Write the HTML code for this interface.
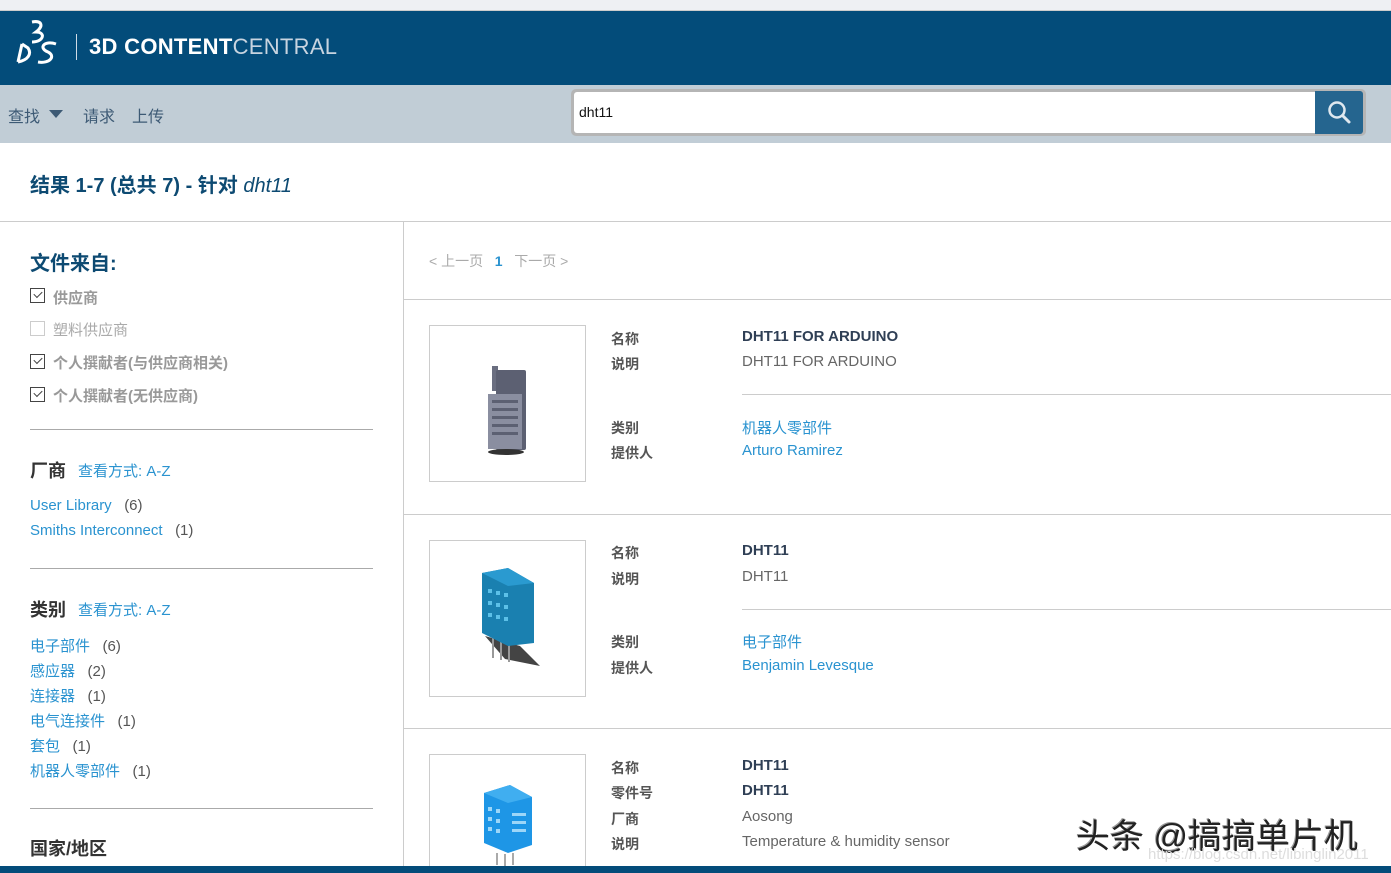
<!DOCTYPE html>
<html><head><meta charset="utf-8"><style>
*{margin:0;padding:0;box-sizing:border-box}
html,body{width:1391px;height:873px;overflow:hidden}
body{background:#fff;font-family:"Liberation Sans","Noto Sans CJK SC",sans-serif;position:relative;color:#555}
.a{position:absolute;white-space:nowrap}
.lbl{font-size:14px;font-weight:bold;color:#555}
.val{font-size:15px;color:#666}
.bv{font-size:15px;font-weight:bold;color:#2f3f55}
.lk{color:#2a93d0}
.cb{position:absolute;width:15px;height:15px;border:1px solid #444;left:30px}
.cb::after{content:"";position:absolute;left:3px;top:2px;width:7px;height:4px;border-left:1.5px solid #444;border-bottom:1.5px solid #444;transform:rotate(-45deg)}
.cb.n::after{display:none}
.cbl{font-size:15px;font-weight:bold;color:#999}
.hr{position:absolute;background:#ccc;height:1px}
.thumb{position:absolute;left:429px;width:157px;height:157px;border:1px solid #ccc;background:#fff;overflow:hidden}
</style></head><body>
<div class="a" style="left:0;top:0;width:1391px;height:11px;background:#eef0f3;border-bottom:1px solid #ccc"></div>
<div class="a" style="left:0;top:11px;width:1391px;height:74px;background:#034c7a"></div>
<svg class="a" style="left:14px;top:18px" width="50" height="48" viewBox="0 0 50 48"><path d="M18 4 C28 2 30 8 22 14 C32 14 30 24 18 24" fill="none" stroke="#fff" stroke-width="3"/><path d="M8 26 L4 44 M4 44 C14 42 18 36 14 30 L8 26" fill="none" stroke="#fff" stroke-width="3"/><path d="M42 26 C30 22 24 30 34 34 C42 38 36 46 24 44" fill="none" stroke="#fff" stroke-width="3"/></svg>
<div class="a" style="left:76px;top:34px;width:1px;height:26px;background:#cfdbe6"></div>
<div class="a" style="left:89px;top:34px;font-size:22px;color:#fff;letter-spacing:0.3px"><b>3D CONTENT</b><span style="color:#c8d4e0">CENTRAL</span></div>
<div class="a" style="left:0;top:85px;width:1391px;height:58px;background:#c1cdd6"></div>
<div class="a" style="left:8px;top:103px;font-size:16px;color:#3d5a75">查找</div>
<svg class="a" style="left:49px;top:110px" width="14" height="9"><path d="M0 0 L14 0 L7 8Z" fill="#3d5a75"/></svg>
<div class="a" style="left:83px;top:103px;font-size:16px;color:#3d5a75">请求</div>
<div class="a" style="left:132px;top:103px;font-size:16px;color:#3d5a75">上传</div>
<div class="a" style="left:571px;top:89px;width:795px;height:47px;background:#b5b5b5;border-radius:5px"></div>
<div class="a" style="left:574px;top:92px;width:741px;height:41px;background:#fff;border-radius:3px 0 0 3px"></div>
<div class="a" style="left:579px;top:104px;font-size:14px;color:#111">dht11</div>
<div class="a" style="left:1315px;top:91px;width:48px;height:43px;background:#25658f;border-radius:0 3px 3px 0"></div>
<svg class="a" style="left:1327px;top:100px" width="26" height="26" viewBox="0 0 26 26"><circle cx="10" cy="10" r="7.5" fill="none" stroke="#dfe8ef" stroke-width="2.5"/><path d="M15.5 15.5 L22 22" stroke="#dfe8ef" stroke-width="3" stroke-linecap="round"/></svg>
<div class="a" style="left:30px;top:169px;font-size:20px;font-weight:bold;color:#0d4a72">结果 1-7 (总共 7) - 针对 <i style="font-weight:normal">dht11</i></div>
<div class="hr" style="left:0;top:221px;width:1391px"></div>
<div class="a" style="left:403px;top:221px;width:1px;height:645px;background:#ccc"></div>
<div class="a" style="left:30px;top:247px;font-size:20px;font-weight:bold;color:#0d4a72">文件来自:</div>
<div class="cb" style="top:288px"></div><div class="a cbl" style="left:53px;top:287px">供应商</div>
<div class="cb n" style="top:321px;border-color:#ccc"></div><div class="a cbl" style="left:53px;top:319px;font-weight:normal;color:#aaa">塑料供应商</div>
<div class="cb" style="top:354px"></div><div class="a cbl" style="left:53px;top:352px">个人撰献者(与供应商相关)</div>
<div class="cb" style="top:387px"></div><div class="a cbl" style="left:53px;top:385px">个人撰献者(无供应商)</div>
<div class="hr" style="left:30px;top:429px;width:343px;background:#aaa"></div>
<div class="a" style="left:30px;top:457px;font-size:18px;font-weight:bold;color:#333">厂商</div><div class="a lk" style="left:78px;top:460px;font-size:15px">查看方式: A-Z</div>
<div class="a" style="left:30px;top:497px;font-size:15px"><span class="lk">User Library</span>&nbsp;&nbsp;&nbsp;(6)</div>
<div class="a" style="left:30px;top:522px;font-size:15px"><span class="lk">Smiths Interconnect</span>&nbsp;&nbsp;&nbsp;(1)</div>
<div class="hr" style="left:30px;top:568px;width:343px;background:#aaa"></div>
<div class="a" style="left:30px;top:596px;font-size:18px;font-weight:bold;color:#333">类别</div><div class="a lk" style="left:78px;top:599px;font-size:15px">查看方式: A-Z</div>
<div class="a" style="left:30px;top:634px;font-size:15px;line-height:25px"><span class="lk">电子部件</span>&nbsp;&nbsp;&nbsp;(6)<br><span class="lk">感应器</span>&nbsp;&nbsp;&nbsp;(2)<br><span class="lk">连接器</span>&nbsp;&nbsp;&nbsp;(1)<br><span class="lk">电气连接件</span>&nbsp;&nbsp;&nbsp;(1)<br><span class="lk">套包</span>&nbsp;&nbsp;&nbsp;(1)<br><span class="lk">机器人零部件</span>&nbsp;&nbsp;&nbsp;(1)</div>
<div class="hr" style="left:30px;top:808px;width:343px;background:#aaa"></div>
<div class="a" style="left:30px;top:835px;font-size:18px;font-weight:bold;color:#333">国家/地区</div>
<div class="a" style="left:429px;top:251px;font-size:14px;color:#aaa">&lt; 上一页&nbsp;&nbsp;&nbsp;<b class="lk">1</b>&nbsp;&nbsp;&nbsp;下一页 &gt;</div>
<div class="hr" style="left:403px;top:299px;width:988px"></div>
<!-- result 1 -->
<div class="thumb" style="top:325px"><svg width="155" height="155" viewBox="0 0 155 155"><rect x="62" y="40" width="6" height="25" fill="#6a6e80"/><rect x="66" y="44" width="30" height="80" rx="2" fill="#5c6072"/><rect x="58" y="68" width="34" height="55" fill="#8a8ea0"/><g fill="#5c6072"><rect x="62" y="74" width="26" height="3"/><rect x="62" y="82" width="26" height="3"/><rect x="62" y="90" width="26" height="3"/><rect x="62" y="98" width="26" height="3"/><rect x="62" y="106" width="26" height="3"/></g><ellipse cx="76" cy="126" rx="18" ry="3" fill="#333"/></svg></div>
<div class="a lbl" style="left:611px;top:329px">名称</div><div class="a bv" style="left:742px;top:328px">DHT11 FOR ARDUINO</div>
<div class="a lbl" style="left:611px;top:354px">说明</div><div class="a val" style="left:742px;top:353px">DHT11 FOR ARDUINO</div>
<div class="hr" style="left:742px;top:394px;width:649px"></div>
<div class="a lbl" style="left:611px;top:418px">类别</div><div class="a val lk" style="left:742px;top:417px">机器人零部件</div>
<div class="a lbl" style="left:611px;top:443px">提供人</div><div class="a val lk" style="left:742px;top:442px">Arturo Ramirez</div>
<div class="hr" style="left:403px;top:514px;width:988px"></div>
<!-- result 2 -->
<div class="thumb" style="top:540px"><svg width="155" height="155" viewBox="0 0 155 155"><path d="M55 95 L90 105 L110 125 L75 118Z" fill="#444"/><rect x="62" y="95" width="2" height="22" fill="#999"/><rect x="70" y="97" width="2" height="22" fill="#999"/><rect x="78" y="99" width="2" height="22" fill="#999"/><path d="M52 32 L78 27 L104 42 L104 102 L78 105 L52 92Z" fill="#1a80b0"/><path d="M52 32 L78 27 L104 42 L78 45Z" fill="#2a9ad0"/><g fill="#5cc0e8"><rect x="58" y="48" width="4" height="4"/><rect x="66" y="50" width="4" height="4"/><rect x="74" y="52" width="4" height="4"/><rect x="58" y="60" width="4" height="4"/><rect x="66" y="62" width="4" height="4"/><rect x="74" y="64" width="4" height="4"/><rect x="58" y="72" width="4" height="4"/><rect x="66" y="74" width="4" height="4"/><rect x="74" y="76" width="4" height="4"/></g></svg></div>
<div class="a lbl" style="left:611px;top:543px">名称</div><div class="a bv" style="left:742px;top:542px">DHT11</div>
<div class="a lbl" style="left:611px;top:569px">说明</div><div class="a val" style="left:742px;top:568px">DHT11</div>
<div class="hr" style="left:742px;top:609px;width:649px"></div>
<div class="a lbl" style="left:611px;top:632px">类别</div><div class="a val lk" style="left:742px;top:631px">电子部件</div>
<div class="a lbl" style="left:611px;top:658px">提供人</div><div class="a val lk" style="left:742px;top:657px">Benjamin Levesque</div>
<div class="hr" style="left:403px;top:728px;width:988px"></div>
<!-- result 3 -->
<div class="thumb" style="top:754px;height:112px;border-bottom:none"><svg width="155" height="112" viewBox="0 0 155 112"><path d="M54 38 L80 30 L102 42 L102 90 L78 98 L54 88Z" fill="#1e96e6"/><path d="M54 38 L80 30 L102 42 L78 48Z" fill="#40aef0"/><g fill="#9dd6f8"><rect x="58" y="52" width="4" height="4"/><rect x="66" y="54" width="4" height="4"/><rect x="58" y="62" width="4" height="4"/><rect x="66" y="64" width="4" height="4"/><rect x="58" y="72" width="4" height="4"/><rect x="66" y="74" width="4" height="4"/><rect x="82" y="58" width="14" height="3"/><rect x="82" y="66" width="14" height="3"/><rect x="82" y="74" width="14" height="3"/></g><rect x="66" y="98" width="2" height="12" fill="#aaa"/><rect x="74" y="99" width="2" height="12" fill="#aaa"/><rect x="82" y="98" width="2" height="12" fill="#aaa"/></svg></div>
<div class="a lbl" style="left:611px;top:758px">名称</div><div class="a bv" style="left:742px;top:757px">DHT11</div>
<div class="a lbl" style="left:611px;top:783px">零件号</div><div class="a bv" style="left:742px;top:782px">DHT11</div>
<div class="a lbl" style="left:611px;top:809px">厂商</div><div class="a val" style="left:742px;top:808px">Aosong</div>
<div class="a lbl" style="left:611px;top:834px">说明</div><div class="a val" style="left:742px;top:833px">Temperature &amp; humidity sensor</div>
<div class="a" style="left:1076px;top:809px;font-size:34px;color:#222;text-shadow:1px 1px 0 #fff,-1px -1px 0 #999">头条 @搞搞单片机</div>
<div class="a" style="left:1148px;top:846px;font-size:15px;color:#ddd">https://blog.csdn.net/libinglin2011</div>
<div class="a" style="left:0;top:866px;width:1391px;height:7px;background:#034c7a"></div>
</body></html>
